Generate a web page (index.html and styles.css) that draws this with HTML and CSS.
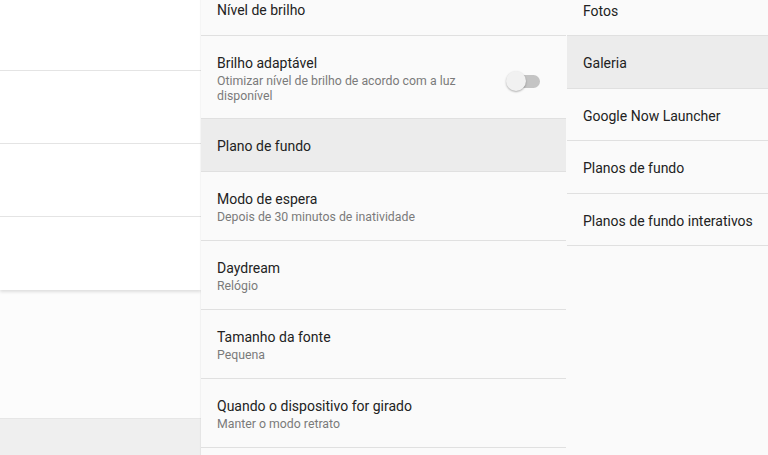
FILE: index.html
```html
<!DOCTYPE html>
<html lang="pt">
<head>
    <meta charset="UTF-8">
    <meta name="viewport" content="width=device-width, initial-scale=1.0">
    <title>Tela</title>
    <link rel="stylesheet" href="styles.css">
</head>
<body>
    <div class="screen">
        <div class="left">
            <div class="card">
                <div class="card-row first"></div>
                <div class="card-row"></div>
                <div class="card-row"></div>
                <div class="card-row last"></div>
            </div>
            <div class="blank"></div>
            <div class="footer-bar"></div>
        </div>

        <div class="middle">
            <div class="row">
                <div class="title">Nível de brilho</div>
            </div>
            <div class="row with-switch">
                <div class="text">
                    <div class="title">Brilho adaptável</div>
                    <div class="sub">Otimizar nível de brilho de acordo com a luz disponível</div>
                </div>
                <div class="switch"><span class="thumb"></span></div>
            </div>
            <div class="row active">
                <div class="title">Plano de fundo</div>
            </div>
            <div class="row">
                <div class="title">Modo de espera</div>
                <div class="sub">Depois de 30 minutos de inatividade</div>
            </div>
            <div class="row">
                <div class="title">Daydream</div>
                <div class="sub">Relógio</div>
            </div>
            <div class="row">
                <div class="title">Tamanho da fonte</div>
                <div class="sub">Pequena</div>
            </div>
            <div class="row">
                <div class="title">Quando o dispositivo for girado</div>
                <div class="sub">Manter o modo retrato</div>
            </div>
            <div class="row empty"></div>
        </div>

        <div class="right">
            <div class="item">Fotos</div>
            <div class="item active">Galeria</div>
            <div class="item">Google Now Launcher</div>
            <div class="item">Planos de fundo</div>
            <div class="item">Planos de fundo interativos</div>
        </div>
    </div>
</body>
</html>
```

FILE: styles.css
```css
html, body {
    margin: 0;
    padding: 0;
}
body {
    font-family: Roboto, "Noto Sans", Arial, sans-serif;
    background-color: #fafafa;
    color: #222;
    overflow: hidden;
}
.screen {
    display: flex;
    width: 768px;
    height: 455px;
    overflow: hidden;
}

/* left pane */
.left {
    width: 201px;
    flex-shrink: 0;
    display: flex;
    flex-direction: column;
    background-color: #fcfcfc;
}
.card {
    background-color: #fff;
    box-shadow: 0 2px 3px rgba(0, 0, 0, 0.12);
}
.card-row {
    height: 72px;
    border-bottom: 1px solid #e4e4e4;
}
.card-row.first {
    height: 70px;
}
.card-row.last {
    height: 73px;
    border-bottom: none;
}
.blank {
    height: 128px;
}
.footer-bar {
    flex: 1;
    background-color: #efefef;
    border-top: 1px solid #e6e6e6;
}

/* settings list */
.middle {
    width: 365px;
    flex-shrink: 0;
    margin-top: -17px;
    background-color: #fafafa;
    box-shadow: -1px 0 1px rgba(0, 0, 0, 0.04);
}
.row {
    padding: 17px 16px 15px;
    border-bottom: 1px solid #e0e0e0;
}
.row.active {
    background-color: #ececec;
}
.row.empty {
    height: 20px;
}
.row.with-switch {
    display: flex;
    align-items: center;
    padding-right: 26px;
    padding-bottom: 14px;
}
.row.with-switch .text {
    flex: 1;
    padding-right: 40px;
}
.title {
    font-size: 14px;
    line-height: 20px;
    color: #222;
}
.sub {
    font-size: 12.3px;
    line-height: 15px;
    color: #7a7a7a;
    margin-top: 1px;
}
.switch {
    position: relative;
    width: 33px;
    height: 13px;
    border-radius: 7px;
    background-color: #c4c4c4;
    margin-top: 6px;
}
.thumb {
    position: absolute;
    left: -1px;
    top: -4px;
    width: 20px;
    height: 20px;
    border-radius: 50%;
    background-color: #f1f1f1;
    box-shadow: 0 1px 2px rgba(0, 0, 0, 0.3);
}

/* app chooser */
.right {
    flex: 1;
    margin-top: -16.5px;
    margin-left: 1px;
    background-color: #fafafa;
}
.item {
    font-size: 14px;
    line-height: 20px;
    padding: 17px 16px 14.5px;
    border-bottom: 1px solid #e0e0e0;
    white-space: nowrap;
}
.item.active {
    background-color: #ececec;
}
```
